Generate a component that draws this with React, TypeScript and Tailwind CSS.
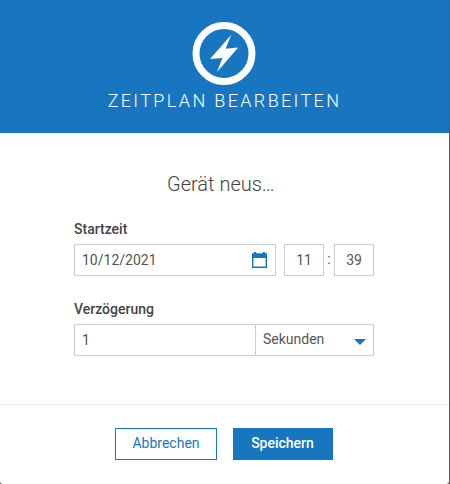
function BoltIcon() {
  return (
    <svg className="mt-[22px] mr-[2px] block h-[64px] w-[64px]" viewBox="0 0 64 64">
      <circle cx="32" cy="31.5" r="28" fill="none" stroke="#fff" strokeWidth="7" />
      <path d="M39.3 12.8 33.6 26.8 46.2 25.4 25 50 30.4 36 18 37Z" fill="#fff" />
    </svg>
  );
}

function CalendarIcon() {
  return (
    <svg className="block h-4 w-[15px]" viewBox="0 0 15 16">
      <path
        fillRule="evenodd"
        fill="#1875bf"
        d="M2 0h2.2v1.2h6.6V0H13v1.2h2V16H0V1.2h2ZM1.4 6v8.6h12.2V6Z"
      />
    </svg>
  );
}

export default function App() {
  return (
    <div className="flex h-[484px] w-[450px] bg-[#5d5d5d] font-['Roboto',sans-serif] text-[14px] text-[#555]">
      <main className="flex w-[449px] flex-col rounded-b-[3px] bg-white">
        <header className="flex h-[133px] flex-col items-center bg-[#1875bf]">
          <BoltIcon />
          <h1 className="mt-[1px] whitespace-nowrap text-[18px] leading-[28px] font-light tracking-[2.35px] text-white">
            ZEITPLAN BEARBEITEN
          </h1>
        </header>

        <section className="ml-[74px] flex h-[271px] w-[300px] flex-col">
          <h2 className="mt-[38px] ml-[93px] text-[20px] leading-[26px] font-light whitespace-nowrap text-[#444]">
            Gerät neus…
          </h2>
          <div className="mt-[23px] h-6 leading-[18px] font-medium text-[#444]">Startzeit</div>
          <div className="flex h-8">
            <div className="flex w-[202px] items-center justify-between border border-[#c8cdd2] pr-[8px] pl-[7px]">
              <span>10/12/2021</span>
              <CalendarIcon />
            </div>
            <div className="ml-2 flex w-10 items-center justify-center border border-[#c8cdd2]">11</div>
            <span className="w-[10px] text-center leading-[31px]">:</span>
            <div className="flex w-10 items-center justify-center border border-[#c8cdd2]">39</div>
          </div>
          <div className="mt-6 h-6 leading-[18px] font-medium text-[#444]">Verzögerung</div>
          <div className="flex h-8 border border-[#c8cdd2]">
            <div className="flex w-[181px] items-center border-r border-[#c8cdd2] pl-[7px]">1</div>
            <div className="flex flex-1 justify-between pr-[7px] pl-[7px] leading-[28px]">
              <span>Sekunden</span>
              <svg className="mt-[14px] block h-[6px] w-[12px]" viewBox="0 0 12 6">
                <path d="M0 0h12L6 6Z" fill="#1875bf" />
              </svg>
            </div>
          </div>
        </section>

        <footer className="flex flex-1 gap-4 border-t border-[#eee] pt-[23px] pl-[115px]">
          <button className="h-8 w-[102px] border border-[#1875bf] pb-[1px] text-[#1875bf]">Abbrechen</button>
          <button className="h-8 w-[100px] bg-[#1875bf] pr-[1px] pb-[1px] font-medium text-white">Speichern</button>
        </footer>
      </main>
    </div>
  );
}
